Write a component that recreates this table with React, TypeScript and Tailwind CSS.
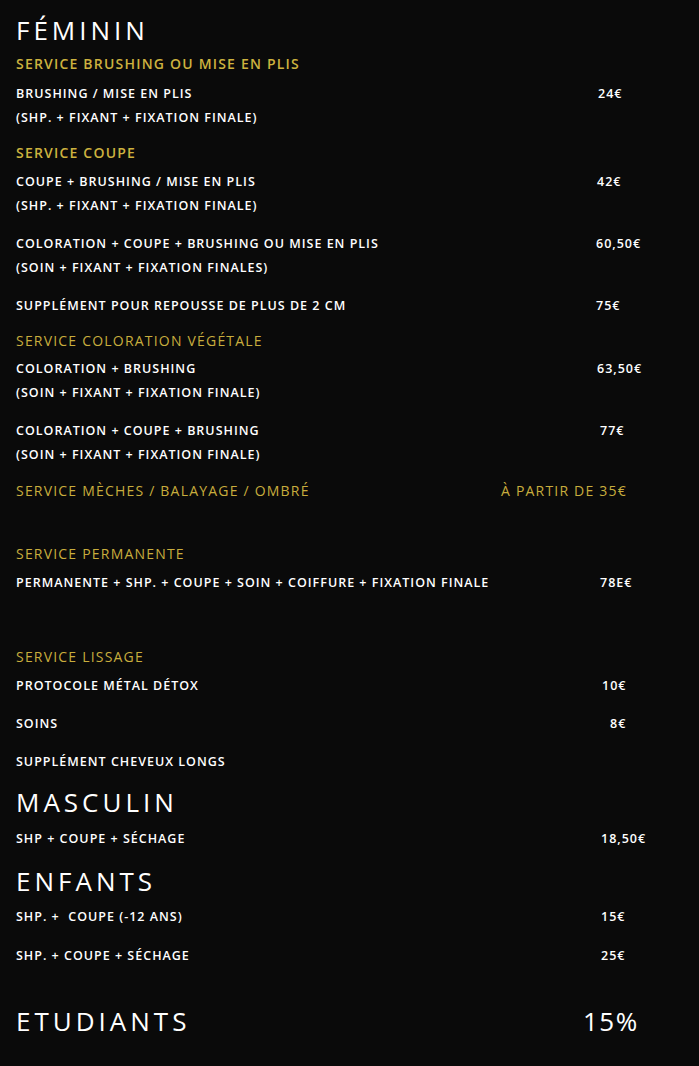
import React from 'react';

type Row =
  | { kind: 'title'; text: string; mt: string; price?: string; priceW?: string }
  | { kind: 'head'; text: string; mt: string; light?: boolean; price?: string; priceW?: string }
  | { kind: 'item'; lines: string[]; mt: string; price?: string; priceW?: string };

const rows: Row[] = [
  { kind: 'title', text: 'FÉMININ', mt: 'mt-0' },
  { kind: 'head', text: 'SERVICE BRUSHING OU MISE EN PLIS', mt: 'mt-[3px]' },
  { kind: 'item', lines: ['BRUSHING / MISE EN PLIS', '(SHP. + FIXANT + FIXATION FINALE)'], mt: 'mt-[7px]', price: '24€', priceW: 'w-[582px]' },
  { kind: 'head', text: 'SERVICE COUPE', mt: 'mt-[10px]' },
  { kind: 'item', lines: ['COUPE + BRUSHING / MISE EN PLIS', '(SHP. + FIXANT + FIXATION FINALE)'], mt: 'mt-[6px]', price: '42€', priceW: 'w-[581px]' },
  { kind: 'item', lines: ['COLORATION + COUPE + BRUSHING OU MISE EN PLIS', '(SOIN + FIXANT + FIXATION FINALES)'], mt: 'mt-[14px]', price: '60,50€', priceW: 'w-[580px]' },
  { kind: 'item', lines: ['SUPPLÉMENT POUR REPOUSSE DE PLUS DE 2 CM'], mt: 'mt-[14px]', price: '75€', priceW: 'w-[580px]' },
  { kind: 'head', text: 'SERVICE COLORATION VÉGÉTALE', mt: 'mt-[10px]', light: true },
  { kind: 'item', lines: ['COLORATION + BRUSHING', '(SOIN + FIXANT + FIXATION FINALE)'], mt: 'mt-[5px]', price: '63,50€', priceW: 'w-[581px]' },
  { kind: 'item', lines: ['COLORATION + COUPE + BRUSHING', '(SOIN + FIXANT + FIXATION FINALE)'], mt: 'mt-[14px]', price: '77€', priceW: 'w-[584px]' },
  { kind: 'head', text: 'SERVICE MÈCHES / BALAYAGE / OMBRÉ', mt: 'mt-[11px]', light: true, price: 'À PARTIR DE 35€', priceW: 'w-[485px]' },
  { kind: 'head', text: 'SERVICE PERMANENTE', mt: 'mt-[39px]', light: true },
  { kind: 'item', lines: ['PERMANENTE + SHP. + COUPE + SOIN + COIFFURE + FIXATION FINALE'], mt: 'mt-[6px]', price: '78E€', priceW: 'w-[584px]' },
  { kind: 'head', text: 'SERVICE LISSAGE', mt: 'mt-[49px]', light: true },
  { kind: 'item', lines: ['PROTOCOLE MÉTAL DÉTOX'], mt: 'mt-[6px]', price: '10€', priceW: 'w-[586px]' },
  { kind: 'item', lines: ['SOINS'], mt: 'mt-[14px]', price: '8€', priceW: 'w-[594px]' },
  { kind: 'item', lines: ['SUPPLÉMENT CHEVEUX LONGS'], mt: 'mt-[14px]' },
  { kind: 'title', text: 'MASCULIN', mt: 'mt-[10px]' },
  { kind: 'item', lines: ['SHP + COUPE + SÉCHAGE'], mt: 'mt-[7px]', price: '18,50€', priceW: 'w-[585px]' },
  { kind: 'title', text: 'ENFANTS', mt: 'mt-[12px]' },
  { kind: 'item', lines: ['SHP. +  COUPE (-12 ANS)'], mt: 'mt-[6px]', price: '15€', priceW: 'w-[585px]' },
  { kind: 'item', lines: ['SHP. + COUPE + SÉCHAGE'], mt: 'mt-[15px]', price: '25€', priceW: 'w-[585px]' },
  { kind: 'title', text: 'ETUDIANTS', mt: 'mt-[35px]', price: '15%', priceW: 'w-[567px]' },
];

const RowView: React.FC<{ row: Row }> = ({ row }) => {
  if (row.kind === 'title') {
    return (
      <div className={`flex h-9 items-center ${row.mt}`}>
        <div className={`${row.priceW ?? ''} shrink-0 text-[26px] font-medium tracking-[4px] text-white`}>{row.text}</div>
        {row.price && <div className="text-[26px] font-medium tracking-[1.5px] text-white">{row.price}</div>}
      </div>
    );
  }
  if (row.kind === 'head') {
    const color = row.light ? 'text-[#c8ad3d] font-medium' : 'text-[#cdb23f] font-semibold';
    return (
      <div className={`flex h-6 items-center ${row.mt} ${color} text-[14px] tracking-[1.2px]`}>
        <div className={`${row.priceW ?? ''} shrink-0`}>{row.text}</div>
        {row.price && <div>{row.price}</div>}
      </div>
    );
  }
  return (
    <div className={`flex ${row.mt} text-[12.5px] font-semibold tracking-[1px] text-white`}>
      <div className={`${row.priceW ?? 'w-[582px]'} shrink-0`}>
        {row.lines.map((l, i) => (
          <div key={i} className="flex h-6 items-center whitespace-pre">
            {l}
          </div>
        ))}
      </div>
      {row.price && <div className="flex h-6 items-center">{row.price}</div>}
    </div>
  );
};

export default function App() {
  return (
    <div className="min-h-screen bg-[#0a0a0a] pl-4 pt-3 pb-6" style={{ fontFamily: '"Open Sans", "Noto Sans", sans-serif' }}>
      {rows.map((r, i) => (
        <RowView key={i} row={r} />
      ))}
    </div>
  );
}
